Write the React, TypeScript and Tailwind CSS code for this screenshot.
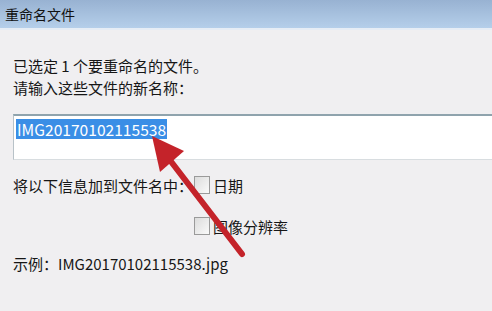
export default function App() {
  return (
    <div
      className="relative w-[492px] h-[311px] overflow-hidden bg-[#f0eff1] text-[#161616]"
      style={{ fontFamily: '"Noto Sans CJK SC", "Noto Sans", sans-serif' }}
    >
      {/* 标题栏 */}
      <div className="h-[28px] bg-gradient-to-b from-[#98b2d2] to-[#b5cfea] flex items-center pl-[5px] text-[14px] leading-none text-[#111]">
        重命名文件
      </div>
      <div className="h-[2px] bg-[#e6edf5]" />

      <div className="pl-[13px] pt-[25px]">
        <p className="text-[15px] leading-[22px]">已选定 1 个要重命名的文件。</p>
        <p className="text-[15px] leading-[22px]">请输入这些文件的新名称：</p>

        {/* 输入框 */}
        <div className="mt-[15px] h-[46px] w-[490px] bg-white border-t-[2px] border-t-[#8fa3ad] border-l border-l-[#b8c2c8] border-b border-b-[#d8dde0] pl-[2px] pt-[1px]">
          <span className="inline-block bg-[#3a8ee6] text-white text-[15.6px] leading-[20px] px-[1px]">
            IMG20170102115538
          </span>
        </div>

        {/* 选项 */}
        <div className="mt-[13px] flex items-center h-[24px]">
          <span className="text-[15px] leading-none w-[181px]">将以下信息加到文件名中：</span>
          <span className="w-[16px] h-[18px] border border-[#9a9a9a] bg-gradient-to-br from-[#dcdcdc] to-[#fafafa]" />
          <span className="ml-[3px] text-[15px] leading-none">日期</span>
        </div>
        <div className="mt-[17px] flex items-center h-[24px]">
          <span className="w-[181px]" />
          <span className="w-[16px] h-[18px] border border-[#9a9a9a] bg-gradient-to-br from-[#dcdcdc] to-[#fafafa]" />
          <span className="ml-[3px] text-[15px] leading-none">图像分辨率</span>
        </div>

        <p className="mt-[15px] text-[15px] leading-[22px]">示例：IMG20170102115538.jpg</p>
      </div>

      {/* 红色箭头 */}
      <svg className="absolute left-0 top-0 pointer-events-none" width="492" height="311" viewBox="0 0 492 311">
        <line x1="242" y1="254" x2="166" y2="155" stroke="#c4232a" strokeWidth="6" strokeLinecap="round" />
        <polygon points="152,136 184,151 160,172" fill="#c4232a" />
      </svg>
    </div>
  )
}
